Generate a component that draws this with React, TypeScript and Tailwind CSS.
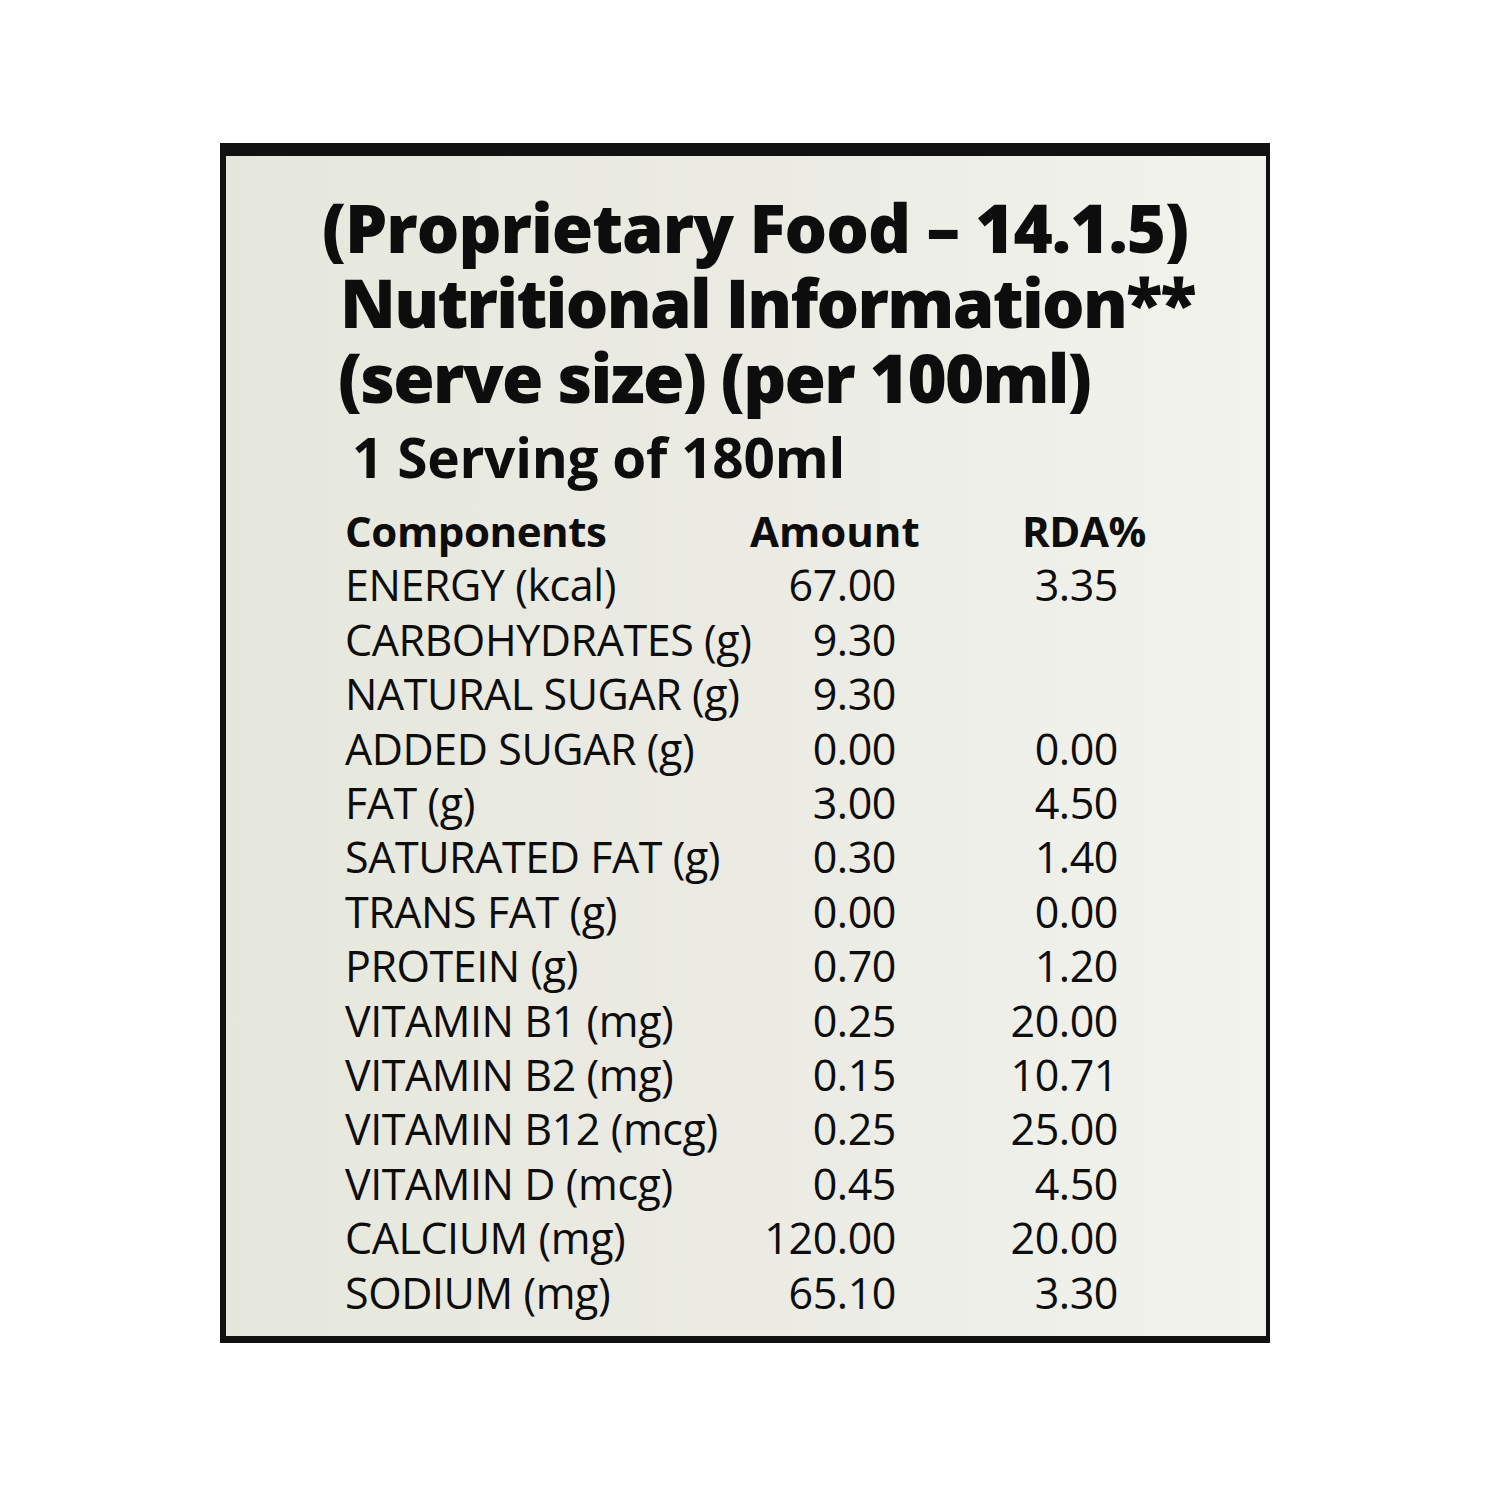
const rows: [string, string, string][] = [
  ["ENERGY (kcal)", "67.00", "3.35"],
  ["CARBOHYDRATES (g)", "9.30", ""],
  ["NATURAL SUGAR (g)", "9.30", ""],
  ["ADDED SUGAR (g)", "0.00", "0.00"],
  ["FAT (g)", "3.00", "4.50"],
  ["SATURATED FAT (g)", "0.30", "1.40"],
  ["TRANS FAT (g)", "0.00", "0.00"],
  ["PROTEIN (g)", "0.70", "1.20"],
  ["VITAMIN B1 (mg)", "0.25", "20.00"],
  ["VITAMIN B2 (mg)", "0.15", "10.71"],
  ["VITAMIN B12 (mcg)", "0.25", "25.00"],
  ["VITAMIN D (mcg)", "0.45", "4.50"],
  ["CALCIUM (mg)", "120.00", "20.00"],
  ["SODIUM (mg)", "65.10", "3.30"],
];

export default function App() {
  return (
    <div className="h-[1500px] w-[1500px] bg-white pt-[143px] pl-[220px] font-['Open_Sans',sans-serif] text-[#0d0d0d]">
      <div className="h-[1200px] w-[1050px] border-t-[13px] border-l-[6px] border-r-[4px] border-b-[7px] border-[#111] bg-gradient-to-r from-[#e6e7dc] via-[#ebebe4] to-[#f3f3ee] pl-[119px] pt-[34px]">
        <div className="text-[67px] font-extrabold leading-[75px]">
          <div className="-ml-[23px] whitespace-nowrap tracking-[-0.015em]">(Proprietary Food – 14.1.5)</div>
          <div className="-ml-[5px] whitespace-nowrap tracking-[-0.025em]">Nutritional Information**</div>
          <div className="-ml-[7px] whitespace-nowrap tracking-[-0.025em]">(serve size) (per 100ml)</div>
        </div>
        <div className="mt-[12px] ml-[7px] whitespace-nowrap text-[55px] font-bold leading-[60px] tracking-[-0.005em]">
          1 Serving of 180ml
        </div>
        <div className="mt-[17px] flex text-[42px] font-bold leading-[54.4px]">
          <div className="w-[405px] tracking-[-0.01em]">Components</div>
          <div className="w-[272px]">Amount</div>
          <div className="tracking-[-0.01em]">RDA%</div>
        </div>
        {rows.map(([name, amount, rda]) => (
          <div key={name} className="flex text-[43px] font-medium leading-[54.4px] tracking-[-0.01em]">
            <div className="w-[408px] whitespace-nowrap">{name}</div>
            <div className="w-[143px] text-right">{amount}</div>
            <div className="w-[222px] text-right">{rda}</div>
          </div>
        ))}
      </div>
    </div>
  );
}
